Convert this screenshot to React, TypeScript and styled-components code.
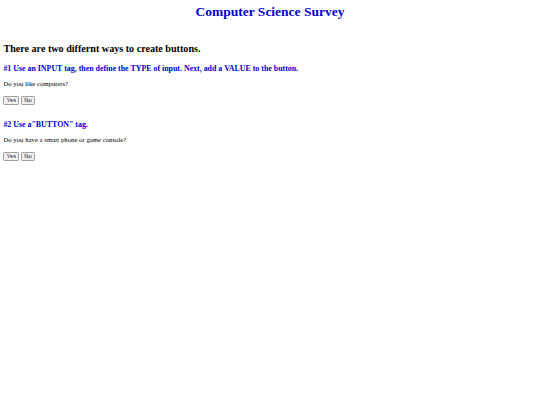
import React from 'react';
import styled, { createGlobalStyle } from 'styled-components';

const GlobalStyle = createGlobalStyle`
  html, body {
    margin: 0;
    padding: 0;
    background: #ffffff;
  }
  body {
    font-family: "Liberation Serif", "Times New Roman", serif;
    color: #000000;
  }
`;

const Page = styled.div`
  padding: 3.4px;
  display: flex;
  flex-direction: column;
`;

const Title = styled.h1`
  margin: 1px 0 0;
  font-size: 13.5px;
  line-height: 15.5px;
  font-weight: bold;
  text-align: center;
  color: mediumblue;
`;

const Intro = styled.h2`
  margin: 23.4px 0 0;
  font-size: 10.125px;
  line-height: 11.6px;
  font-weight: bold;
`;

const Step = styled.h3<{ $gap: number }>`
  margin: ${p => p.$gap}px 0 0;
  font-size: 7.9px;
  line-height: 9.1px;
  font-weight: bold;
  color: mediumblue;
`;

const Question = styled.p`
  margin: 7.5px 0 0;
  font-size: 6.75px;
  line-height: 7.8px;
`;

const ButtonRow = styled.div`
  margin-top: 7.6px;
  display: flex;
  gap: 1.8px;
`;

const Choice = styled.button`
  margin: 0;
  height: 9px;
  padding: 0 2.2px;
  font-family: Arial, "Liberation Sans", sans-serif;
  font-size: 5.8px;
  line-height: 7px;
  color: #222222;
  background: #efefef;
  border: 0.5px solid #a0a0a0;
  border-radius: 1.2px;
`;

const sections = [
  {
    step: '#1 Use an INPUT tag, then define the TYPE of input. Next, add a VALUE to the button.',
    question: 'Do you like computers?',
    gap: 8.7,
  },
  {
    step: '#2 Use a"BUTTON" tag.',
    question: 'Do you have a smart phone or game console?',
    gap: 15,
  },
];

export default function App() {
  return (
    <Page>
      <GlobalStyle />
      <Title>Computer Science Survey</Title>
      <Intro>There are two differnt ways to create buttons.</Intro>
      {sections.map(({ step, question, gap }) => (
        <React.Fragment key={step}>
          <Step $gap={gap}>{step}</Step>
          <Question>{question}</Question>
          <ButtonRow>
            <Choice type="button">Yes</Choice>
            <Choice type="button">No</Choice>
          </ButtonRow>
        </React.Fragment>
      ))}
    </Page>
  );
}
